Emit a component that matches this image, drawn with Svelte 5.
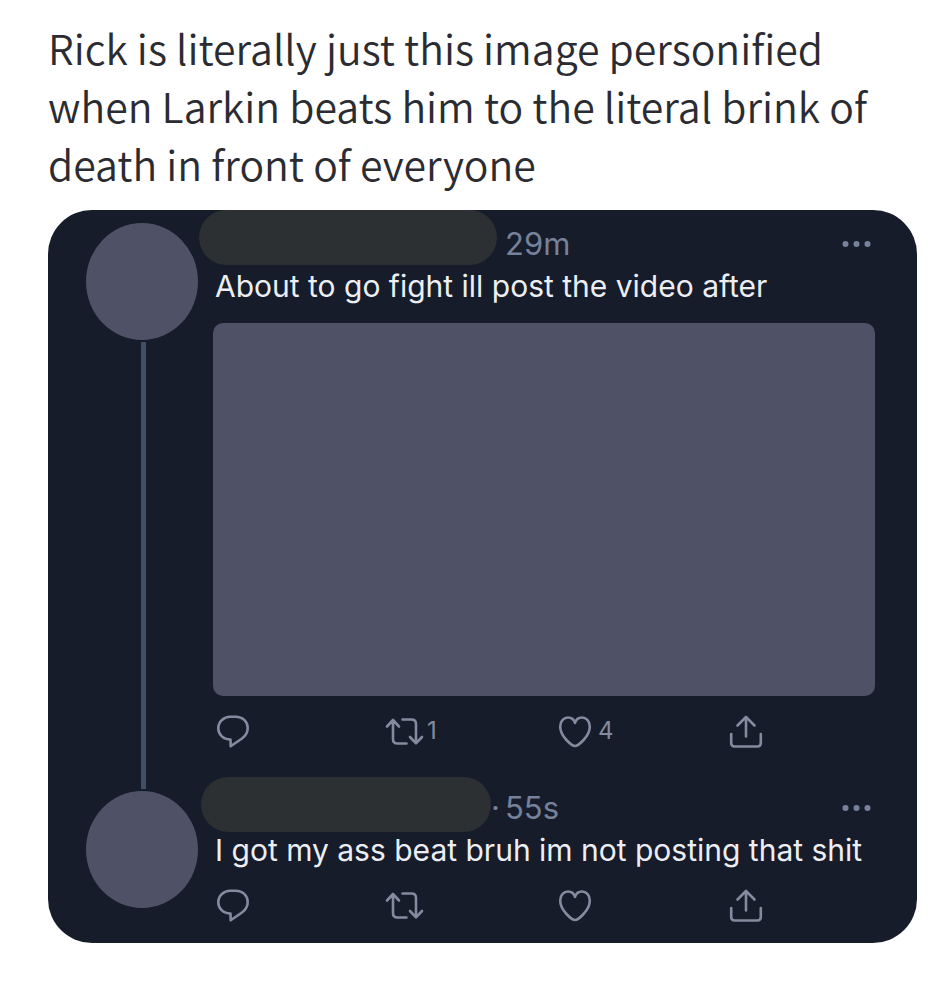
<script>
  const posts = [
    {
      id: 'first',
      time: '29m',
      datetime: 'PT29M',
      text: 'About to go fight ill post the video after',
      media: true,
      reposts: '1',
      likes: '4'
    },
    {
      id: 'reply',
      time: '55s',
      datetime: 'PT55S',
      text: 'I got my ass beat bruh im not posting that shit',
      media: false,
      reposts: '',
      likes: ''
    }
  ];
</script>

<main>
  <p class="caption">
    Rick is literally just this image personified<br />
    when Larkin beats him to the literal brink of<br />
    death in front of everyone
  </p>

  <section class="card">
    {#each posts as post (post.id)}
      <article class="post {post.id}">
        <div class="rail">
          <div class="avatar"></div>
          {#if post.media}<div class="thread"></div>{/if}
        </div>

        <div class="content">
          <header>
            <div class="author">
              <span class="name"></span>
              {#if !post.media}<span class="dot">·</span>{/if}
            </div>
            <time datetime={post.datetime}>{post.time}</time>
            <button class="more" aria-label="More">
              <svg viewBox="0 0 36 12" width="36" height="12">
                <circle cx="6.500" cy="6" r="3" />
                <circle cx="17.500" cy="6" r="3" />
                <circle cx="28.500" cy="6" r="3" />
              </svg>
            </button>
          </header>

          <p class="text">{post.text}</p>

          {#if post.media}<div class="media"></div>{/if}

          <div class="actions">
            <button aria-label="Reply">
              <svg viewBox="0 0 36 36">
                <path d="M15.500 26.500C8 26.500 3.300 21.200 3.300 15.200C3.300 8.500 9 3.700 15 3.700H21C27.500 3.700 32.700 8.500 32.700 15C32.700 19.500 30.500 23 27 25.500L15.700 33.300Z" />
              </svg>
            </button>
            <button aria-label="Repost">
              <svg viewBox="0 0 36 36">
                <path d="M1 13.500L7 7L13 13.500M7 7.500V26Q7 30.500 11.500 30.500H20.500M16.500 6.500H25.500Q30 6.500 30 11V30M24 24L30 30.300L36 24" />
              </svg>
              {#if post.reposts}<span>{post.reposts}</span>{/if}
            </button>
            <button aria-label="Like">
              <svg viewBox="0 0 36 36">
                <path d="M18 33C15 33 3.200 23.500 3.200 13.500C3.200 8 7 4.500 11 4.500C14.500 4.500 17 6.500 18 10C19 6.500 21.500 4.500 25 4.500C29 4.500 32.800 8 32.800 13.500C32.800 23.500 21 33 18 33Z" />
              </svg>
              {#if post.likes}<span>{post.likes}</span>{/if}
            </button>
            <button aria-label="Share">
              <svg viewBox="0 0 36 36">
                <path d="M18 23.500V4.500M9.500 12.500L18 4L26.500 12.500M3.200 21V30Q3.200 33.500 6.700 33.500H29.300Q32.800 33.500 32.800 30V21" />
              </svg>
            </button>
          </div>
        </div>
      </article>
    {/each}
  </section>
</main>

<style>
  :global(body) {
    margin: 0;
    background: #fff;
  }

  main {
    padding: 18px 33px 56px 48px;
    font-family: Inter, 'Liberation Sans', sans-serif;
  }

  p {
    margin: 0;
  }

  .caption {
    margin-bottom: 18px;
    font-family: 'Noto Sans CJK SC', 'Open Sans', sans-serif;
    font-size: 41px;
    font-weight: 350;
    line-height: 58px;
    color: #2b2c32;
  }

  .card {
    overflow: hidden;
    padding: 0 42px 0 38px;
    border-radius: 44px;
    background: #161c2a;
  }

  .post {
    display: grid;
    grid-template-columns: 112px minmax(0, 1fr);
    gap: 15px;
    padding-bottom: 25px;
  }

  .reply {
    padding-bottom: 20px;
  }

  .rail {
    display: flex;
    flex-direction: column;
    align-items: center;
    padding-top: 13px;
  }

  .reply .rail {
    padding-top: 17px;
  }

  .avatar {
    width: 112px;
    height: 117px;
    border-radius: 50%;
    background: #4f5266;
  }

  .thread {
    flex: 1;
    width: 5px;
    margin: 2px 0 -40px 2px;
    background: #414f66;
  }

  header {
    display: flex;
    height: 54px;
  }

  .author {
    display: flex;
    width: 306px;
    margin-left: -14px;
  }

  .name {
    width: 298px;
    height: 55px;
    border-radius: 28px;
    background: #2c3033;
  }

  .reply .name {
    width: 290px;
    margin: 3px 0 0 2px;
  }

  time,
  .dot {
    margin-top: 14px;
    font-size: 31px;
    line-height: 40px;
    color: #76819a;
  }

  .more {
    height: 12px;
    margin: 28px 0 0 auto;
  }

  .more svg {
    fill: #76819a;
  }

  .text {
    padding-left: 2px;
    font-size: 30px;
    line-height: 44px;
    color: #eceef4;
  }

  .media {
    margin-top: 15px;
    aspect-ratio: 662 / 373;
    border-radius: 10px;
    background: #4f5266;
  }

  .actions {
    display: grid;
    grid-template-columns: repeat(3, 1fr) 36px;
    margin-top: 15px;
    padding: 0 111px 0 2px;
  }

  .media + .actions {
    margin-top: 17px;
  }

  button {
    display: flex;
    align-items: center;
    gap: 5px;
    padding: 0;
    border: 0;
    background: none;
    font: inherit;
    font-size: 24px;
    line-height: 36px;
    color: #858b9f;
    cursor: pointer;
  }

  .actions svg {
    flex: none;
    width: 36px;
    height: 36px;
    overflow: visible;
    fill: none;
    stroke: currentColor;
    stroke-width: 2.6;
    stroke-linecap: round;
    stroke-linejoin: round;
  }
</style>
